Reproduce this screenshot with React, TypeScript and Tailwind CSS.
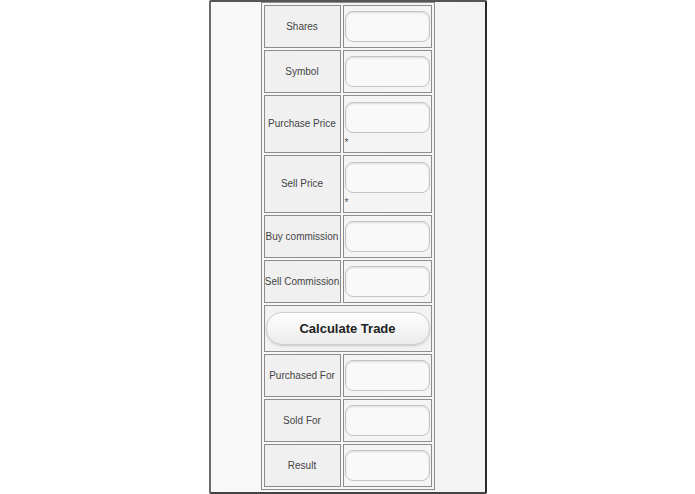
import React from "react";

type Row = { label: string; tall?: boolean };

const inputs: Row[] = [
  { label: "Shares" },
  { label: "Symbol" },
  { label: "Purchase Price", tall: true },
  { label: "Sell Price", tall: true },
  { label: "Buy commission" },
  { label: "Sell Commission" },
];

const results: Row[] = [
  { label: "Purchased For" },
  { label: "Sold For" },
  { label: "Result" },
];

function Field() {
  return (
    <input
      type="text"
      className="block w-[85px] h-[31px] rounded-[8px] border border-[#c4c4c4] bg-[#f9f9f9] shadow-[inset_0_1px_2px_rgba(0,0,0,0.12)] outline-none"
    />
  );
}

function FormRow({ label, tall }: Row) {
  return (
    <tr className={tall ? "h-[58px]" : "h-[43px]"}>
      <td className="w-[77px] max-w-[77px] border border-[#8c8c8c] bg-[#f0f0f0] p-0 text-center align-middle text-[10px] leading-[12px] text-[#444] whitespace-nowrap">
        {label}
      </td>
      <td className="w-[89px] border border-[#8c8c8c] bg-[#f4f4f4] px-[1px] py-0 align-middle">
        <Field />
        {tall && <div className="h-[14px] pt-[5px] text-[10px] leading-[10px] text-[#555]">*</div>}
      </td>
    </tr>
  );
}

export default function App() {
  return (
    <div className="w-[695px] h-[494px] bg-white flex justify-center" style={{ fontFamily: '"Liberation Sans", Arial, sans-serif' }}>
      <div className="w-[278px] h-[494px] border-x-2 border-t-2 border-b-2 border-l-[#6a6a6a] border-r-[#2a2a2a] border-t-[#555] border-b-[#444] rounded-[2px] bg-gradient-to-r from-[#f9f9f9] to-[#f3f3f3] flex justify-center">
        <table className="border-separate border-spacing-[2px] border border-[#8c8c8c] self-start">
          <tbody>
            {inputs.map((r) => (
              <FormRow key={r.label} {...r} />
            ))}
            <tr className="h-[47px]">
              <td colSpan={2} className="border border-[#8c8c8c] bg-[#f2f2f2] p-0 px-[1px] align-middle">
                <button className="w-full h-[33px] rounded-[16px] border border-[#cfcfcf] bg-gradient-to-b from-white to-[#ebebeb] shadow-[0_1px_2px_rgba(0,0,0,0.18)] text-[13px] font-bold text-[#222]">
                  Calculate Trade
                </button>
              </td>
            </tr>
            {results.map((r) => (
              <FormRow key={r.label} {...r} />
            ))}
          </tbody>
        </table>
      </div>
    </div>
  );
}
